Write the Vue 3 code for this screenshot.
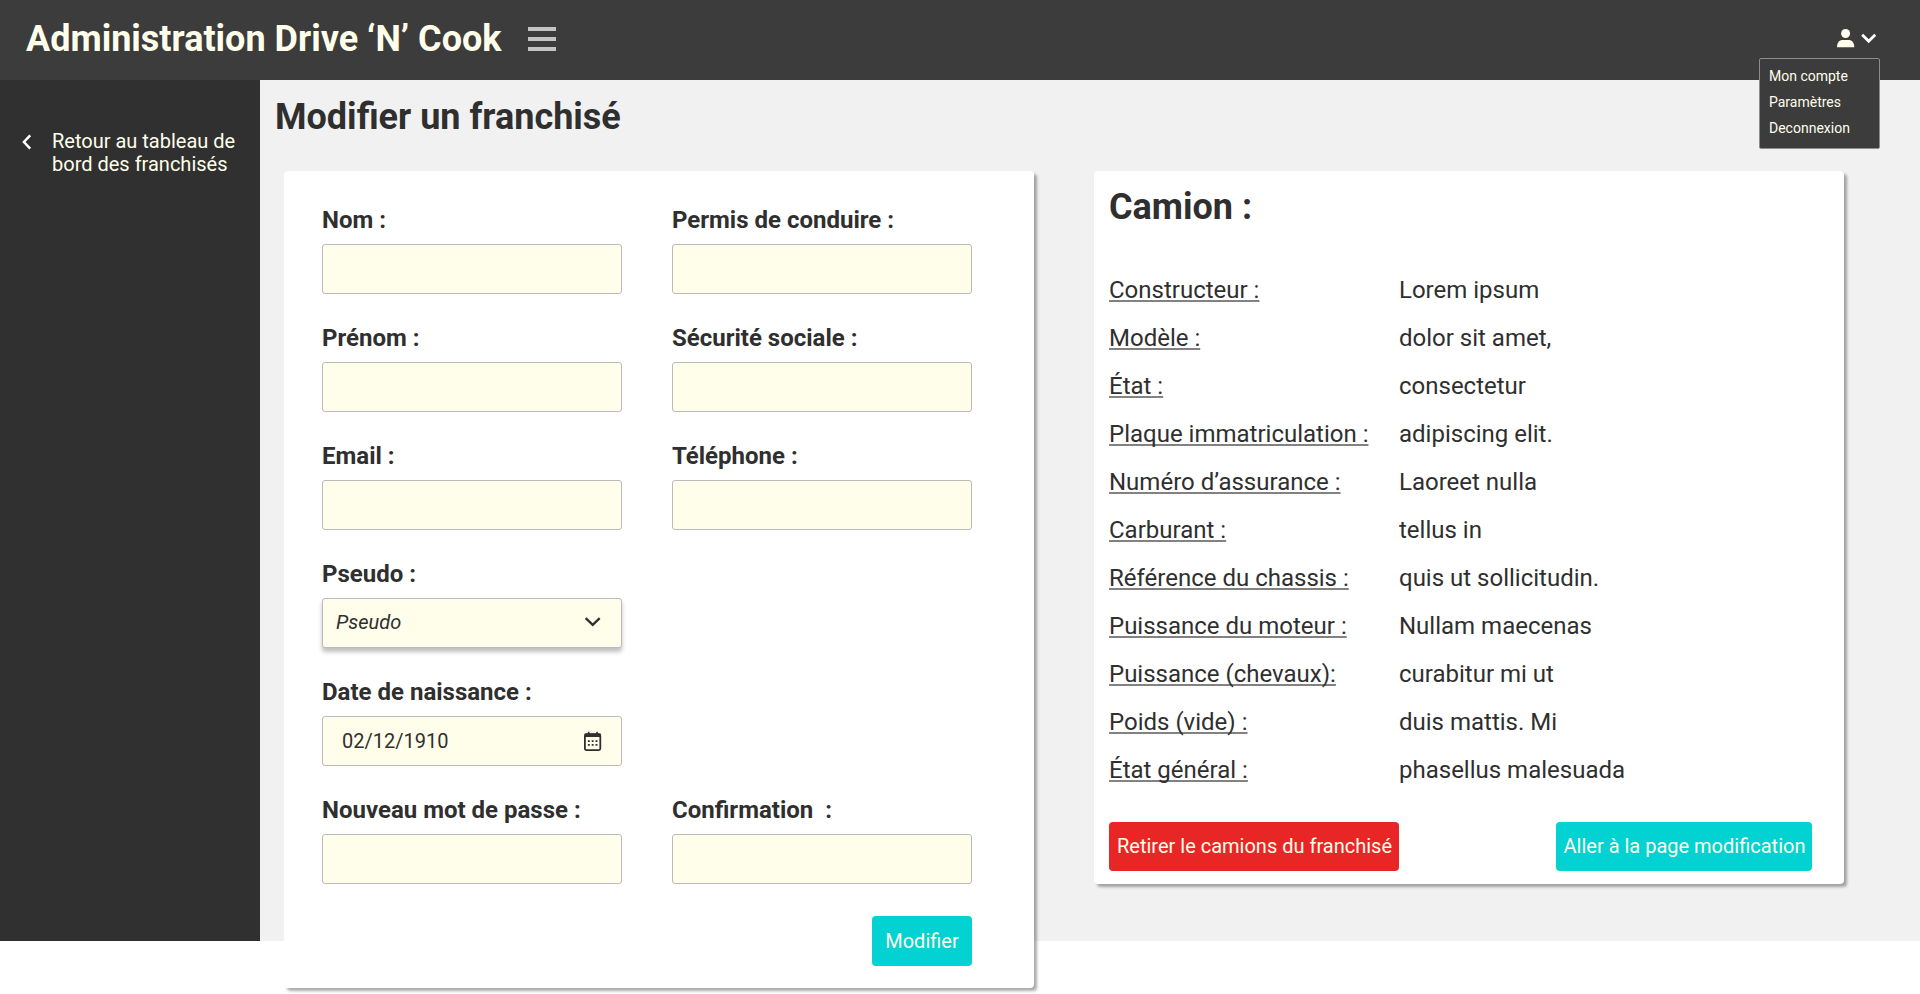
<script setup>
const rows = [
  [{ label: 'Nom :' }, { label: 'Permis de conduire :' }],
  [{ label: 'Prénom :' }, { label: 'Sécurité sociale :' }],
  [{ label: 'Email :' }, { label: 'Téléphone :' }],
  [{ label: 'Pseudo :', type: 'select', value: 'Pseudo' }],
  [{ label: 'Date de naissance :', type: 'date', value: '02/12/1910' }],
  [{ label: 'Nouveau mot de passe :' }, { label: 'Confirmation  :' }],
]

const truck = [
  ['Constructeur :', 'Lorem ipsum'],
  ['Modèle :', 'dolor sit amet,'],
  ['État :', 'consectetur'],
  ['Plaque immatriculation :', 'adipiscing elit.'],
  ['Numéro d’assurance :', 'Laoreet nulla'],
  ['Carburant :', 'tellus in'],
  ['Référence du chassis :', 'quis ut sollicitudin.'],
  ['Puissance du moteur :', 'Nullam maecenas'],
  ['Puissance (chevaux):', 'curabitur mi ut'],
  ['Poids (vide) :', 'duis mattis. Mi'],
  ['État général :', 'phasellus malesuada'],
]

const menu = ['Mon compte', 'Paramètres', 'Deconnexion']
</script>

<template>
  <div class="page">
    <header class="topbar">
      <h1 class="brand">Administration Drive ‘N’ Cook</h1>
      <button class="burger" aria-label="Menu"><i></i><i></i><i></i></button>
      <div class="account">
        <svg class="user" width="18" height="19" viewBox="0 0 18 19">
          <circle cx="8.6" cy="4.5" r="4.5" fill="#fffeeb" />
          <path d="M0 18.3C0 13 2.6 11 5.4 11h6.4c2.8 0 5.5 2 5.5 7.3z" fill="#fffeeb" />
        </svg>
        <svg class="caret" width="16" height="11" viewBox="0 0 16 11">
          <path d="M1.2 1.8L7.7 8.3l6.5-6.5" fill="none" stroke="#fff" stroke-width="2.8" />
        </svg>
        <ul class="menu">
          <li v-for="item in menu" :key="item">{{ item }}</li>
        </ul>
      </div>
    </header>

    <div class="body">
      <aside class="sidebar">
        <a class="back">
          <svg width="11" height="16" viewBox="0 0 11 16">
            <path d="M9.2 1.3L2.9 8l6.3 6.7" fill="none" stroke="#fff" stroke-width="2.5" />
          </svg>
          <span>Retour au tableau de<br />bord des franchisés</span>
        </a>
      </aside>

      <main class="content">
        <h2 class="title">Modifier un franchisé</h2>
        <div class="cards">
          <form class="card form" @submit.prevent>
            <div v-for="(row, i) in rows" :key="i" class="row">
              <div v-for="f in row" :key="f.label" class="field">
                <div class="label">{{ f.label }}</div>
                <div class="input" :class="f.type">
                  <span v-if="f.value">{{ f.value }}</span>
                  <svg v-if="f.type === 'select'" width="18" height="12" viewBox="0 0 18 12">
                    <path d="M1.7 2.2l7 6.6 7-6.6" fill="none" stroke="#2f2f2f" stroke-width="2.3" />
                  </svg>
                  <svg v-if="f.type === 'date'" width="18" height="20" viewBox="0 0 18 20">
                    <path d="M4.7 0.8v3M13.1 0.8v3" stroke="#2f2f2f" stroke-width="1.6" />
                    <rect x="0.9" y="3.2" width="15.4" height="15.9" rx="1.5" fill="none" stroke="#2f2f2f" stroke-width="1.8" />
                    <path d="M0.8 2.6h15.8v3.4H0.8z" fill="#2f2f2f" />
                    <path d="M3.9 10.1h9.8M3.9 13.9h9.8" stroke="#2f2f2f" stroke-width="1.9" stroke-dasharray="1.9 1.9" />
                  </svg>
                </div>
              </div>
            </div>
            <button class="btn submit">Modifier</button>
          </form>

          <section class="card truck">
            <h2 class="title">Camion :</h2>
            <dl class="specs">
              <template v-for="[name, value] in truck" :key="name">
                <dt>{{ name }}</dt>
                <dd>{{ value }}</dd>
              </template>
            </dl>
            <div class="actions">
              <button class="btn danger">Retirer le camions du franchisé</button>
              <button class="btn go">Aller à la page modification</button>
            </div>
          </section>
        </div>
      </main>
    </div>
  </div>
</template>

<style>
body {
  background: #fff;
  overflow: hidden;
}
</style>

<style scoped>
* {
  box-sizing: border-box;
  margin: 0;
  padding: 0;
}
.page {
  width: 1920px;
  height: 994px;
  font-family: Roboto, "Liberation Sans", sans-serif;
  color: #2f2f2f;
}
.topbar {
  display: flex;
  align-items: flex-start;
  height: 80px;
  padding-left: 26px;
  background: #3c3c3c;
}
.brand {
  margin-top: 18px;
  font-size: 36px;
  line-height: 42px;
  font-weight: 700;
  color: #fffeeb;
  white-space: nowrap;
}
.burger {
  display: flex;
  flex-direction: column;
  gap: 6px;
  width: 28px;
  margin: 27px 0 0 26px;
  border: 0;
  background: none;
}
.burger i {
  height: 4px;
  background: #c4c4c4;
}
.account {
  position: relative;
  display: flex;
  margin: 29px 43px 0 auto;
}
.caret {
  margin: 4px 0 0 6px;
}
.menu {
  position: absolute;
  top: 29px;
  right: -3px;
  z-index: 2;
  width: 121px;
  height: 91px;
  padding: 9px;
  border: 1px solid #8c8c8c;
  border-radius: 2px;
  background: #3c3c3c;
  list-style: none;
}
.menu li {
  height: 26px;
  font-size: 14px;
  line-height: 16px;
  color: #fffeeb;
}
.body {
  display: flex;
  height: 861px;
}
.sidebar {
  flex: none;
  width: 260px;
  background: #303030;
}
.back {
  display: flex;
  gap: 20px;
  padding: 50px 0 0 21px;
  font-size: 20px;
  line-height: 23px;
  color: #fffeeb;
  white-space: nowrap;
}
.back svg {
  margin-top: 4px;
}
.content {
  flex: 1;
  background: #f1f1f1;
}
.title {
  font-size: 36px;
  line-height: 42px;
  font-weight: 700;
}
.content > .title {
  padding: 16px 0 0 15px;
}
.cards {
  display: flex;
  align-items: flex-start;
  gap: 60px;
  padding: 33px 0 0 24px;
}
.card {
  width: 750px;
  border-radius: 4px;
  background: #fff;
  box-shadow: 3px 3px 3px rgba(0, 0, 0, 0.33);
}
.form {
  display: flex;
  flex-direction: column;
  gap: 30px;
  height: 817px;
  padding: 35px 62px 22px 38px;
}
.row {
  display: flex;
  gap: 50px;
}
.field {
  width: 300px;
}
.label {
  margin-bottom: 10px;
  font-size: 24px;
  line-height: 28px;
  font-weight: 700;
  white-space: pre;
}
.input {
  display: flex;
  align-items: center;
  justify-content: space-between;
  height: 50px;
  border: 1px solid #bababa;
  border-radius: 3px;
  background: #fffeeb;
  font-size: 20px;
  line-height: 24px;
}
.select {
  padding: 0 19px 2px 13px;
  font-style: italic;
  box-shadow: 0 4px 4px rgba(0, 0, 0, 0.25);
}
.date {
  padding: 0 19px;
}
.btn {
  border: 0;
  border-radius: 4px;
  font: 20px/23px Roboto, "Liberation Sans", sans-serif;
  color: #fffeeb;
  background: #02d2d1;
  white-space: nowrap;
}
.submit {
  align-self: flex-end;
  width: 100px;
  height: 50px;
  margin-top: 2px;
}
.truck {
  height: 713px;
  padding: 15px 32px 0 15px;
}
.specs {
  display: grid;
  grid-template-columns: 290px 1fr;
  grid-auto-rows: 28px;
  row-gap: 20px;
  margin-top: 48px;
  font-size: 24px;
  line-height: 28px;
  white-space: nowrap;
}
.specs dt {
  text-decoration: underline 2px #828282;
  text-decoration-skip-ink: none;
  text-underline-offset: 2px;
}
.actions {
  display: flex;
  justify-content: space-between;
  margin-top: 38px;
}
.actions .btn {
  height: 49px;
  padding-left: 1px;
}
.danger {
  width: 290px;
  background: #e92626;
}
.go {
  width: 256px;
}
</style>
